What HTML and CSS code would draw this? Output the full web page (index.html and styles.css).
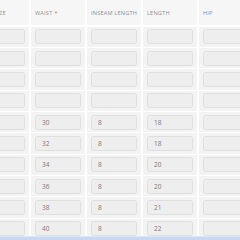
FILE: index.html
```html
<!DOCTYPE html>
<html lang="en">
<head>
  <meta charset="UTF-8" />
  <meta name="viewport" content="width=device-width, initial-scale=1" />
  <title>Size Chart</title>
  <link rel="stylesheet" href="styles.css">
</head>
<body>

  <div class="sheet">
    <div class="row head">
      <div class="cell">Size</div>
      <div class="cell">Waist <span class="req">*</span></div>
      <div class="cell">Inseam Length</div>
      <div class="cell">Length</div>
      <div class="cell">Hip</div>
    </div>
    <div id="rows"></div>
  </div>

  <div class="selbar"></div>

<script>
  // size chart rows: waist, inseam, length (blank rows first)
  const data = [
    ['', '', ''], ['', '', ''], ['', '', ''], ['', '', ''],
    ['30', '8', '18'],
    ['32', '8', '18'],
    ['34', '8', '20'],
    ['36', '8', '20'],
    ['38', '8', '21'],
    ['40', '8', '22']
  ];

  const rowsEl = document.getElementById('rows');
  for (let r of data) {
    const row = document.createElement('div');
    row.className = 'row';
    const vals = ['', r[0], r[1], r[2], ''];
    for (let v of vals) {
      const cell = document.createElement('div');
      cell.className = 'cell';
      const box = document.createElement('div');
      box.className = 'field';
      box.textContent = v;
      cell.appendChild(box);
      row.appendChild(cell);
    }
    rowsEl.appendChild(row);
  }
</script>

</body>
</html>
```

FILE: styles.css
```css
* {
  box-sizing: border-box;
}
body, html {
  margin: 0;
  padding: 0;
  background: #fff;
  font-family: 'Open Sans', 'Liberation Sans', sans-serif;
  overflow: hidden;
  height: 240px;
}
.sheet {
  margin-left: -10px;
  width: 270px;
}
.row {
  display: grid;
  grid-template-columns: 41px repeat(4, 56px);
  height: 21.33px;
  border-bottom: 1.5px solid #fff;
  background: #f3f3f3;
}
.row.head {
  height: 26.67px;
  background: #f6f6f6;
  border-bottom: 2px solid #fff;
}
.cell {
  display: flex;
  align-items: center;
  padding: 0 4px;
  border-right: 2px solid #fff;
  white-space: nowrap;
}
.head .cell {
  font-size: 5.6px;
  text-transform: uppercase;
  letter-spacing: 0.2px;
  color: #8f8f8f;
  padding-top: 2px;
}
.req {
  color: #e35b5b;
  margin-left: 2px;
}
.field {
  width: 100%;
  height: 15px;
  background: #eeeeee;
  border: 1px solid #dfdfdf;
  border-radius: 2.5px;
  font-size: 6.5px;
  color: #7a7a7a;
  padding-left: 6px;
  line-height: 13px;
}
.selbar {
  position: fixed;
  left: 0; right: 0; bottom: 0;
  height: 4px;
  background: #c9d8f0;
  border-top: 1px solid #dde6f5;
}
```
